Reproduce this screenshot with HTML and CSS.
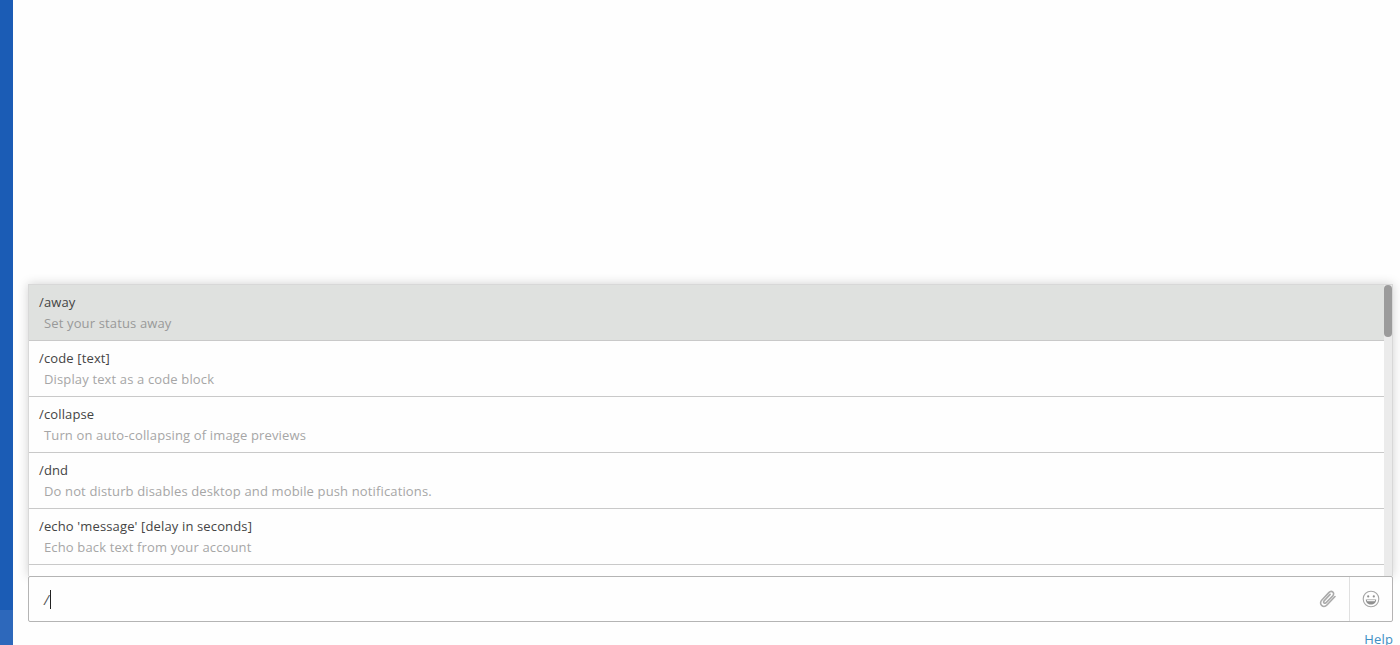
FILE: index.html
```html
<html lang="en">

<head>
    <meta charset="UTF-8">
    <meta name="viewport" content="width=device-width, initial-scale=1.0">
    <title>Slash commands</title>
    <link rel="stylesheet" href="styles.css">
</head>

<body>
    <div class="sidebar">
        <div class="sidebar-footer"></div>
    </div>

    <div class="main">
        <!-- Command suggestions -->
        <div class="suggestions">
            <div class="suggestion-list">
                <div class="suggestion active">
                    <div class="command">/away</div>
                    <div class="description">Set your status away</div>
                </div>
                <div class="suggestion">
                    <div class="command">/code [text]</div>
                    <div class="description">Display text as a code block</div>
                </div>
                <div class="suggestion">
                    <div class="command">/collapse</div>
                    <div class="description">Turn on auto-collapsing of image previews</div>
                </div>
                <div class="suggestion">
                    <div class="command">/dnd</div>
                    <div class="description">Do not disturb disables desktop and mobile push notifications.</div>
                </div>
                <div class="suggestion">
                    <div class="command">/echo 'message' [delay in seconds]</div>
                    <div class="description">Echo back text from your account</div>
                </div>
            </div>
            <div class="scroll-track">
                <div class="scroll-thumb"></div>
            </div>
        </div>

        <!-- Message box -->
        <div class="composer">
            <div class="composer-text"><span class="typed">/</span><span class="caret"></span></div>
            <div class="composer-attach">
                <svg width="20" height="20" viewBox="0 0 20 20" fill="none" stroke="#ababab" stroke-width="1.6" stroke-linecap="round">
                    <path d="M17 7.5 9.2 15.8c-1.7 1.8-4.1 2-5.6.6-1.5-1.4-1.3-3.7.3-5.4l6.9-7.4c1.2-1.3 3-1.5 4.1-.5 1.1 1 .9 2.7-.3 4L8.2 13.6c-.7.7-1.6.9-2.2.3-.6-.6-.4-1.500.3-2.300l5.800-6.200"/>
                </svg>
            </div>
            <div class="composer-emoji">
                <svg width="18" height="18" viewBox="0 0 18 18">
                    <circle cx="9" cy="9" r="7.8" fill="none" stroke="#a6a6a6" stroke-width="1.1"/>
                    <circle cx="6.2" cy="6.4" r="1.1" fill="#8f8f8f"/>
                    <circle cx="11.8" cy="6.4" r="1.1" fill="#8f8f8f"/>
                    <path d="M3.8 9.4h10.4c0 3-2.300 5.100-5.200 5.100s-5.200-2.100-5.200-5.100z" fill="#8f8f8f"/>
                    <path d="M4.800 10h8.400c-.1.500-.3.900-.5 1.300H5.300c-.2-.4-.4-.8-.5-1.300z" fill="#f2f2f2"/>
                </svg>
            </div>
        </div>

        <div class="composer-footer">
            <a class="help-link" href="#">Help</a>
        </div>
    </div>
</body>

</html>
```

FILE: styles.css
```css
html,
body {
    height: 100%;
}

body {
    display: flex;
    margin: 0;
    height: 645px;
    overflow: hidden;
    background: #fefefe;
    font-family: 'Open Sans', sans-serif;
    font-size: 13px;
    letter-spacing: 0.14px;
    color: #444;
}

.sidebar {
    display: flex;
    flex-direction: column;
    justify-content: flex-end;
    flex: 0 0 13px;
    background: #1b5cb5;
}

.sidebar-footer {
    height: 35px;
    background: #2d68bb;
}

.main {
    display: flex;
    flex-direction: column;
    justify-content: flex-start;
    flex: 1;
    min-width: 0;
    padding: 284px 7px 0 15px;
}

.suggestions {
    display: flex;
    height: 292px;
    flex: 0 0 292px;
    overflow: hidden;
    background: #fefefe;
    border: 1px solid #d8d8d8;
    border-bottom: 0;
    box-sizing: border-box;
    box-shadow: 0 0 10px rgba(0, 0, 0, 0.18);
}

.suggestion-list {
    flex: 1;
    min-width: 0;
}

.suggestion {
    height: 56px;
    box-sizing: border-box;
    padding: 7px 10px 0;
    border-bottom: 1px solid #c9c9c9;
    line-height: 21px;
}

.suggestion.active {
    height: 56px;
    background: #dfe1df;
}

.description {
    margin-left: 5px;
    color: #a6a6a6;
}

.active .description {
    color: #999;
}

.scroll-track {
    flex: 0 0 8px;
    background: #ebebeb;
}

.scroll-thumb {
    height: 52px;
    background: #9b9b9b;
    border-radius: 4px;
}

.composer {
    display: flex;
    align-items: stretch;
    flex: 0 0 46px;
    box-sizing: border-box;
    background: #fefefe;
    border: 1px solid #b4b4b4;
    border-radius: 2px;
}

.composer-text {
    display: flex;
    align-items: center;
    flex: 1;
    padding-left: 15px;
    font-size: 14px;
}

.typed {
    font-style: italic;
    color: #555;
}

.caret {
    width: 1px;
    height: 19px;
    margin-left: 1px;
    background: #222;
}

.composer-attach {
    display: flex;
    align-items: center;
    justify-content: center;
    flex: 0 0 43px;
}

.composer-emoji {
    display: flex;
    align-items: center;
    justify-content: center;
    flex: 0 0 42px;
    border-left: 1px solid #e0e0e0;
}

.composer-footer {
    display: flex;
    justify-content: flex-end;
    padding-top: 8px;
    line-height: 18px;
}

.help-link {
    color: #3d8fc4;
    text-decoration: none;
}
```
